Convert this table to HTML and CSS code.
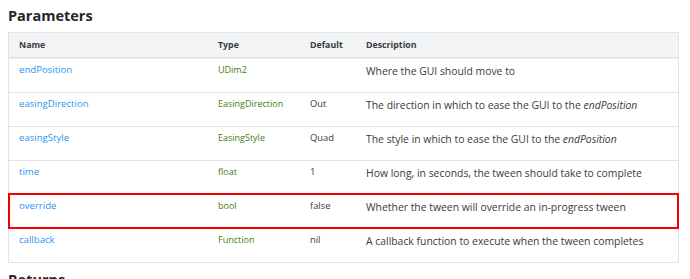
FILE: index.html
```
<!DOCTYPE html>
<html>
<head>
<meta charset="utf-8">
<link rel="stylesheet" href="styles.css">
</head>
<body>
<div class="page">
  <h2 class="title">Parameters</h2>
  <div class="table">
    <div class="row head">
      <div class="cell">Name</div>
      <div class="cell">Type</div>
      <div class="cell">Default</div>
      <div class="cell">Description</div>
    </div>
    <div class="row">
      <div class="cell name">endPosition</div>
      <div class="cell type">UDim2</div>
      <div class="cell def"></div>
      <div class="cell desc">Where the GUI should move to</div>
    </div>
    <div class="row">
      <div class="cell name">easingDirection</div>
      <div class="cell type">EasingDirection</div>
      <div class="cell def">Out</div>
      <div class="cell desc">The direction in which to ease the GUI to the <em>endPosition</em></div>
    </div>
    <div class="row">
      <div class="cell name">easingStyle</div>
      <div class="cell type">EasingStyle</div>
      <div class="cell def">Quad</div>
      <div class="cell desc">The style in which to ease the GUI to the <em>endPosition</em></div>
    </div>
    <div class="row">
      <div class="cell name">time</div>
      <div class="cell type">float</div>
      <div class="cell def">1</div>
      <div class="cell desc">How long, in seconds, the tween should take to complete</div>
    </div>
    <div class="row highlight">
      <div class="cell name">override</div>
      <div class="cell type">bool</div>
      <div class="cell def">false</div>
      <div class="cell desc">Whether the tween will override an in-progress tween</div>
    </div>
    <div class="row">
      <div class="cell name">callback</div>
      <div class="cell type">Function</div>
      <div class="cell def">nil</div>
      <div class="cell desc">A callback function to execute when the tween completes</div>
    </div>
  </div>
  <h2 class="title next">Returns</h2>
</div>
</body>
</html>
```

FILE: styles.css
```
html, body {
  margin: 0;
  padding: 0;
  background: #ffffff;
  overflow: hidden;
}
.page {
  padding: 6px 11px 0 8px;
  font-family: "Open Sans", "Noto Sans", sans-serif;
  color: #393b3d;
}
.title {
  margin: 0 0 6px 0;
  font-size: 14.5px;
  line-height: 20px;
  font-weight: 700;
  color: #24262a;
}
.title.next {
  margin-top: 7px;
}
.table {
  border: 1px solid #e1e4e8;
}
.row {
  display: grid;
  grid-template-columns: 199px 92px 56px 1fr;
  height: 34px;
  border-top: 1px solid #e1e4e8;
  box-sizing: border-box;
}
.row.head {
  height: 25px;
  border-top: none;
  border-bottom: 1px solid #e1e4e8;
  background: #f2f4f5;
  box-shadow: 0 1px 1px rgba(0,0,0,0.05);
}
.row.head + .row {
  border-top: 1px solid #e8eaed;
}
.cell {
  padding: 3px 10px 0 10px;
  font-size: 9.6px;
  line-height: 16px;
  white-space: nowrap;
}
.head .cell {
  padding-top: 4px;
  font-weight: 700;
  font-size: 8.8px;
  color: #393b3d;
}
.name {
  color: #2a95f2;
}
.type {
  color: #3f7d0e;
  font-size: 9px;
}
.def {
  color: #393b3d;
  font-size: 9.4px;
}
.desc {
  font-size: 10.4px;
  padding-top: 4px;
  color: #393b3d;
}
.desc em {
  font-style: italic;
}
.highlight {
  outline: 2px solid #f40000;
  outline-offset: -1px;
}
```
